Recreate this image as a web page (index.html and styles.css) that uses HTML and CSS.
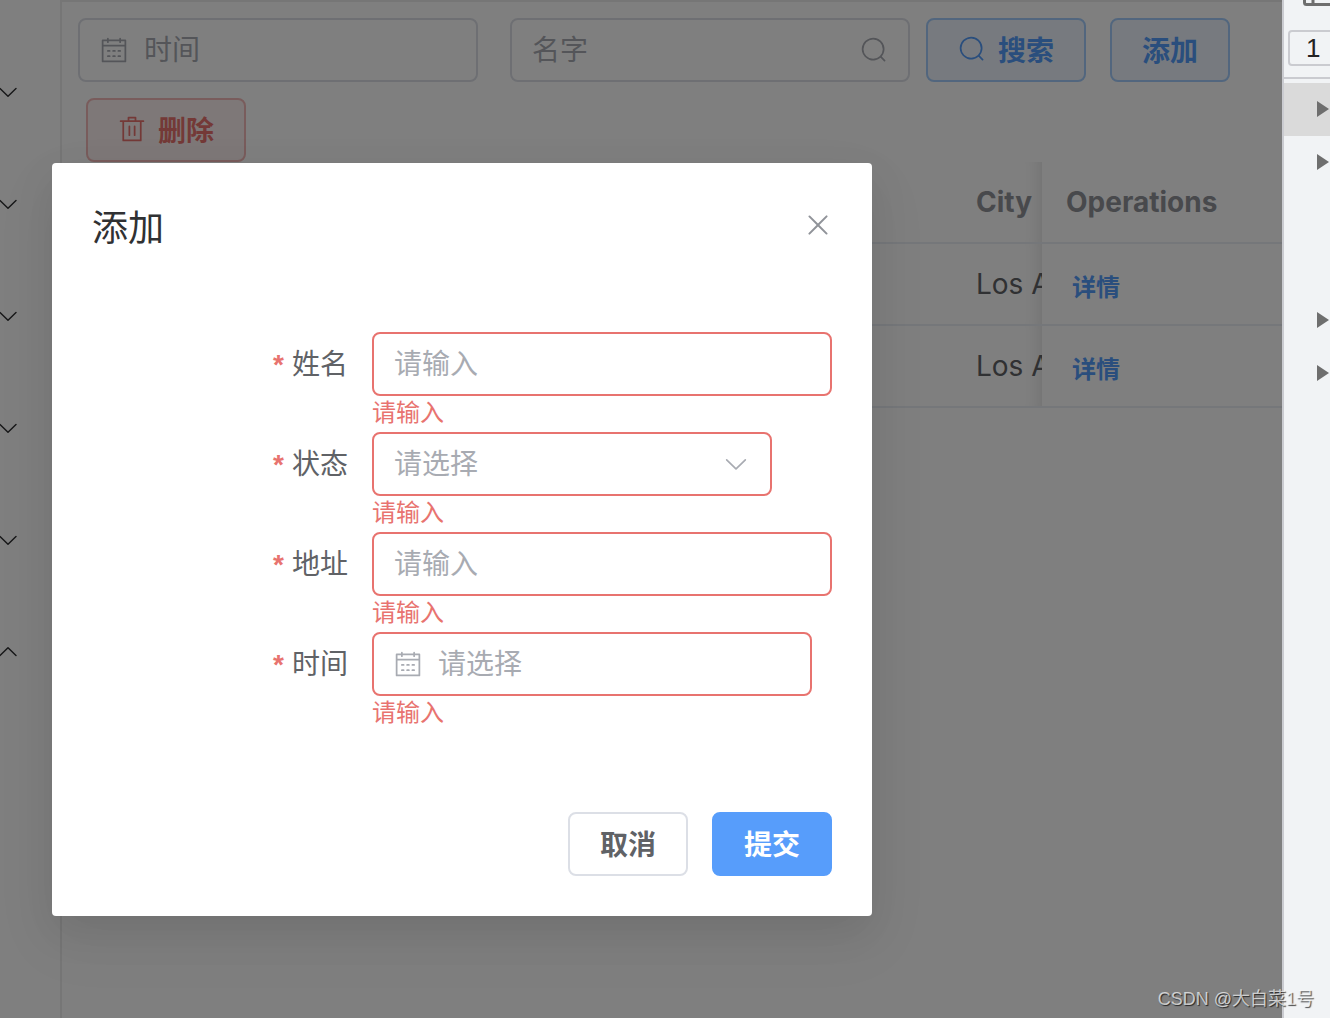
FILE: index.html
```html
<!DOCTYPE html>
<html lang="zh-CN">
<head>
<meta charset="utf-8">
<title>添加</title>
<link rel="stylesheet" href="styles.css">
</head>
<body>
<svg class="sprite" aria-hidden="true">
  <symbol id="arrow" viewBox="0 0 1024 1024"><path d="M831.872 340.864 512 652.672 192.128 340.864a30.592 30.592 0 0 0-42.752 0 29.12 29.12 0 0 0 0 41.6L489.664 714.24a32 32 0 0 0 44.672 0l340.288-331.712a29.12 29.12 0 0 0 0-41.728 30.592 30.592 0 0 0-42.752 0z"/></symbol>
  <symbol id="search" viewBox="0 0 1024 1024"><path d="m795.904 750.72 124.992 124.928a32 32 0 0 1-45.248 45.248L750.656 795.904a416 416 0 1 1 45.248-45.248zM480 832a352 352 0 1 0 0-704 352 352 0 0 0 0 704z"/></symbol>
  <symbol id="delete" viewBox="0 0 1024 1024"><path d="M160 256H96a32 32 0 0 1 0-64h256V95.936a32 32 0 0 1 32-32h256a32 32 0 0 1 32 32V192h256a32 32 0 1 1 0 64h-64v672a32 32 0 0 1-32 32H192a32 32 0 0 1-32-32V256zm448-64v-64H416v64h192zM224 896h576V256H224v640zm192-128a32 32 0 0 1-32-32V416a32 32 0 0 1 64 0v320a32 32 0 0 1-32 32zm192 0a32 32 0 0 1-32-32V416a32 32 0 0 1 64 0v320a32 32 0 0 1-32 32z"/></symbol>
  <symbol id="calendar" viewBox="0 0 1024 1024"><path d="M128 384v512h768V192H768v32a32 32 0 1 1-64 0v-32H320v32a32 32 0 0 1-64 0v-32H128v128h768v64H128zm192-256h384V96a32 32 0 1 1 64 0v32h160a32 32 0 0 1 32 32v768a32 32 0 0 1-32 32H96a32 32 0 0 1-32-32V160a32 32 0 0 1 32-32h160V96a32 32 0 0 1 64 0v32zm-32 384h64a32 32 0 0 1 0 64h-64a32 32 0 0 1 0-64zm0 192h64a32 32 0 1 1 0 64h-64a32 32 0 1 1 0-64zm192-192h64a32 32 0 0 1 0 64h-64a32 32 0 0 1 0-64zm0 192h64a32 32 0 1 1 0 64h-64a32 32 0 1 1 0-64zm192-192h64a32 32 0 1 1 0 64h-64a32 32 0 1 1 0-64zm0 192h64a32 32 0 1 1 0 64h-64a32 32 0 1 1 0-64z"/></symbol>
  <symbol id="close" viewBox="0 0 1024 1024"><path d="M764.288 214.592 512 466.88 259.712 214.592a31.936 31.936 0 0 0-45.12 45.12L466.752 512 214.528 764.224a31.936 31.936 0 1 0 45.12 45.184L512 557.184l252.288 252.288a31.936 31.936 0 0 0 45.12-45.12L557.12 512.064l252.288-252.352a31.936 31.936 0 1 0-45.12-45.184z"/></symbol>
</svg>

<div class="app">
  <nav class="sidebar">
    <button class="submenu" type="button"><svg class="submenu-icon"><use href="#arrow"/></svg></button>
    <button class="submenu" type="button"><svg class="submenu-icon"><use href="#arrow"/></svg></button>
    <button class="submenu" type="button"><svg class="submenu-icon"><use href="#arrow"/></svg></button>
    <button class="submenu" type="button"><svg class="submenu-icon"><use href="#arrow"/></svg></button>
    <button class="submenu" type="button"><svg class="submenu-icon"><use href="#arrow"/></svg></button>
    <button class="submenu submenu-open" type="button"><svg class="submenu-icon"><use href="#arrow"/></svg></button>
  </nav>

  <main class="main">
    <div class="toolbar">
      <label class="field toolbar-field toolbar-date">
        <svg class="icon"><use href="#calendar"/></svg>
        <input class="field-input" type="text" placeholder="时间">
      </label>
      <label class="field toolbar-field toolbar-name">
        <input class="field-input" type="text" placeholder="名字">
        <svg class="icon"><use href="#search"/></svg>
      </label>
      <button class="btn btn-plain-primary toolbar-search" type="button"><svg class="icon"><use href="#search"/></svg>搜索</button>
      <button class="btn btn-plain-primary" type="button">添加</button>
      <button class="btn btn-plain-danger toolbar-delete" type="button"><svg class="icon"><use href="#delete"/></svg>删除</button>
    </div>

    <table class="table">
      <thead>
        <tr><td></td><th class="col-city" scope="col">City</th><th class="col-ops" scope="col">Operations</th></tr>
      </thead>
      <tbody>
        <tr><td></td><td class="col-city">Los Angeles</td><td class="col-ops"><button class="link-btn" type="button">详情</button></td></tr>
        <tr><td></td><td class="col-city">Los Angeles</td><td class="col-ops"><button class="link-btn" type="button">详情</button></td></tr>
      </tbody>
    </table>
  </main>

  <div class="overlay">
    <section class="dialog" role="dialog" aria-labelledby="dialog-title">
      <header class="dialog-header">
        <h2 class="dialog-title" id="dialog-title">添加</h2>
        <button class="dialog-close" type="button"><svg class="close-icon"><use href="#close"/></svg></button>
      </header>
      <form class="form" id="add-form">
        <div class="form-item">
          <label class="form-label" for="name">姓名</label>
          <div class="form-content">
            <div class="field is-error"><input class="field-input" id="name" type="text" placeholder="请输入"></div>
            <p class="form-error">请输入</p>
          </div>
        </div>
        <div class="form-item">
          <label class="form-label" for="status">状态</label>
          <div class="form-content">
            <div class="field is-error field-select">
              <select class="field-input" id="status" required><option value="">请选择</option></select>
              <svg class="icon"><use href="#arrow"/></svg>
            </div>
            <p class="form-error">请输入</p>
          </div>
        </div>
        <div class="form-item">
          <label class="form-label" for="address">地址</label>
          <div class="form-content">
            <div class="field is-error"><input class="field-input" id="address" type="text" placeholder="请输入"></div>
            <p class="form-error">请输入</p>
          </div>
        </div>
        <div class="form-item">
          <label class="form-label" for="time">时间</label>
          <div class="form-content">
            <div class="field is-error field-date">
              <svg class="icon"><use href="#calendar"/></svg>
              <input class="field-input" id="time" type="text" placeholder="请选择">
            </div>
            <p class="form-error">请输入</p>
          </div>
        </div>
      </form>
      <footer class="dialog-footer">
        <button class="btn" type="button">取消</button>
        <button class="btn btn-primary" type="submit" form="add-form">提交</button>
      </footer>
    </section>
  </div>
</div>

<aside class="inspector">
  <div class="inspector-bar">
    <svg class="dock-icon" viewBox="0 0 30 7"><path d="M1.500 0v2.500a2 2 0 0 0 2 2H30M10 0v4" fill="none" stroke="#6e6e6e" stroke-width="3"/></svg>
  </div>
  <div class="inspector-filter"><input class="inspector-input" type="text" value="1" aria-label="1"></div>
  <ul class="tree">
    <li class="tree-row tree-selected"><span class="tree-arrow"></span></li>
    <li class="tree-row"><span class="tree-arrow"></span></li>
    <li class="tree-space"></li>
    <li class="tree-row"><span class="tree-arrow"></span></li>
    <li class="tree-row"><span class="tree-arrow"></span></li>
  </ul>
</aside>

<div class="watermark">CSDN @大白菜1号</div>
</body>
</html>
```
FILE: styles.css
```css
* { box-sizing: border-box; }

body {
  margin: 0;
  display: flex;
  height: 100vh;
  overflow: hidden;
  position: relative;
  background: #fff;
  color: #606266;
  font-family: Inter, "Noto Sans CJK SC", sans-serif;
  font-size: 28px;
}

button, input, select { font: inherit; color: inherit; margin: 0; }
button { cursor: pointer; }

.sprite { position: absolute; width: 0; height: 0; }
.icon { flex: none; width: 28px; height: 28px; fill: currentColor; }

.app {
  position: relative;
  display: flex;
  flex: 1;
  min-width: 0;
  overflow: hidden;
}

/* Sidebar */
.sidebar {
  flex: none;
  width: 62px;
  padding-top: 36px;
  border-right: 2px solid #ececec;
}
.submenu {
  display: flex;
  align-items: center;
  justify-content: flex-end;
  width: 20px;
  height: 112px;
  padding: 0;
  border: 0;
  background: none;
  color: #303133;
}
.submenu-icon { flex: none; width: 24px; height: 24px; fill: currentColor; }
.submenu-open .submenu-icon { transform: rotate(180deg); }

/* Main area */
.main {
  flex: 1;
  min-width: 0;
  padding: 16px 0 0 16px;
  border-top: 2px solid #ececec;
}
.toolbar { display: flex; flex-wrap: wrap; row-gap: 16px; }
.toolbar-field { width: 400px; }
.toolbar-date { margin-right: 32px; }
.toolbar-name { margin-right: 16px; }
.toolbar-search { margin-right: 24px; }
.toolbar-delete { margin-left: 8px; }

.field {
  display: flex;
  align-items: center;
  gap: 16px;
  height: 64px;
  padding: 0 20px;
  border: 2px solid #dcdfe6;
  border-radius: 8px;
  background: #fff;
  color: #a8abb2;
}
.field-input {
  flex: 1;
  min-width: 0;
  height: 60px;
  padding: 0;
  border: 0;
  outline: 0;
  background: none;
  color: #606266;
  appearance: none;
}
.field-input::placeholder { color: #a8abb2; opacity: 1; }
select.field-input:invalid { color: #a8abb2; }
.is-error { border-color: #e8736f; }

.btn {
  display: inline-flex;
  align-items: center;
  justify-content: center;
  gap: 12px;
  height: 64px;
  padding: 0 30px 2px;
  border: 2px solid #dcdfe6;
  border-radius: 8px;
  background: #fff;
  color: #606266;
  font-weight: 700;
}
.btn-primary { border-color: #579dfb; background: #579dfb; color: #fff; }
.btn-plain-primary { border-color: #a4cdfc; background: #eef5fe; color: #559dfb; }
.btn-plain-danger { border-color: #f3b9b8; background: #fcf0f0; color: #e8736f; }

.table {
  width: 100%;
  table-layout: fixed;
  border-collapse: separate;
  border-spacing: 0;
  line-height: 46px;
  text-align: left;
  color: #606266;
}
.table th, .table td {
  height: 82px;
  padding: 0;
  border-bottom: 2px solid #ebeef5;
  white-space: nowrap;
}
.table th { color: #909399; font-weight: 700; }
.table .col-city {
  width: 90px;
  padding-left: 24px;
  overflow: hidden;
  box-shadow: inset -20px 0 20px -20px rgba(0, 0, 0, 0.15);
}
.table .col-ops { width: 240px; padding-left: 24px; }
.link-btn {
  display: block;
  padding: 8px 6px 0;
  border: 0;
  background: none;
  color: #559dfb;
  font-size: 24px;
  font-weight: 700;
  line-height: 32px;
}

/* Dialog */
.overlay {
  position: absolute;
  inset: 0;
  padding: 163px 0 0 52px;
  background: rgba(0, 0, 0, 0.5);
}
.dialog {
  width: 820px;
  max-width: 100%;
  border-radius: 4px;
  background: #fff;
  box-shadow: 0 24px 64px 8px rgba(0, 0, 0, 0.04), 0 16px 40px rgba(0, 0, 0, 0.08);
}
.dialog-header {
  display: flex;
  align-items: center;
  justify-content: space-between;
  padding: 41px 38px 19px 40px;
}
.dialog-title {
  margin: 0;
  color: #303133;
  font-size: 36px;
  font-weight: 400;
  line-height: 49px;
}
.dialog-close {
  display: flex;
  padding: 0 0 8px;
  border: 0;
  background: none;
  color: #909399;
}
.close-icon { width: 32px; height: 32px; fill: currentColor; }
.form { padding: 60px 40px; }
.form-item { display: flex; height: 100px; }
.form-label {
  flex: none;
  width: 280px;
  padding-right: 24px;
  line-height: 65px;
  text-align: right;
}
.form-label::before {
  content: "*";
  margin-right: 8px;
  color: #e8736f;
  font-family: "Liberation Sans", sans-serif;
  font-weight: 700;
}
.form-content { flex: 1; min-width: 0; }
.field-select { width: 400px; }
.field-date { width: 440px; }
.form-error {
  margin: 0;
  padding-top: 5px;
  color: #e8736f;
  font-size: 24px;
  line-height: 24px;
}
.dialog-footer {
  display: flex;
  justify-content: flex-end;
  gap: 24px;
  padding: 20px 40px 40px;
}

/* Inspector panel */
.inspector {
  flex: none;
  width: 48px;
  overflow: hidden;
  border-left: 2px solid #cacbd0;
  background: #f1f3f5;
}
.inspector-bar { height: 30px; padding-left: 19px; }
.dock-icon { display: block; width: 30px; height: 7px; }
.inspector-filter {
  height: 49px;
  padding-left: 4px;
  border-bottom: 2px solid #cacbd0;
}
.inspector-input {
  display: block;
  width: 80px;
  height: 36px;
  padding: 0 16px;
  border: 2px solid #cacbd0;
  border-radius: 4px;
  background: #f1f3f5;
  color: #222;
  font-family: "Liberation Sans", sans-serif;
  font-size: 26px;
}
.tree { margin: 0; padding: 4px 0 0; list-style: none; }
.tree-row { display: flex; height: 53px; padding: 18px 0 0 33px; }
.tree-space { height: 105px; }
.tree-selected { background: #dadada; }
.tree-arrow {
  height: 16px;
  border-style: solid;
  border-width: 8px 0 8px 12px;
  border-color: transparent transparent transparent #6e6e6e;
}

.watermark {
  position: absolute;
  right: 16px;
  bottom: 6px;
  color: rgba(255, 255, 255, 0.7);
  font-family: "Liberation Sans", "Noto Sans CJK SC", sans-serif;
  font-size: 18px;
  line-height: 26px;
  text-shadow: 1px 1px 1px rgba(0, 0, 0, 0.7);
}
```
